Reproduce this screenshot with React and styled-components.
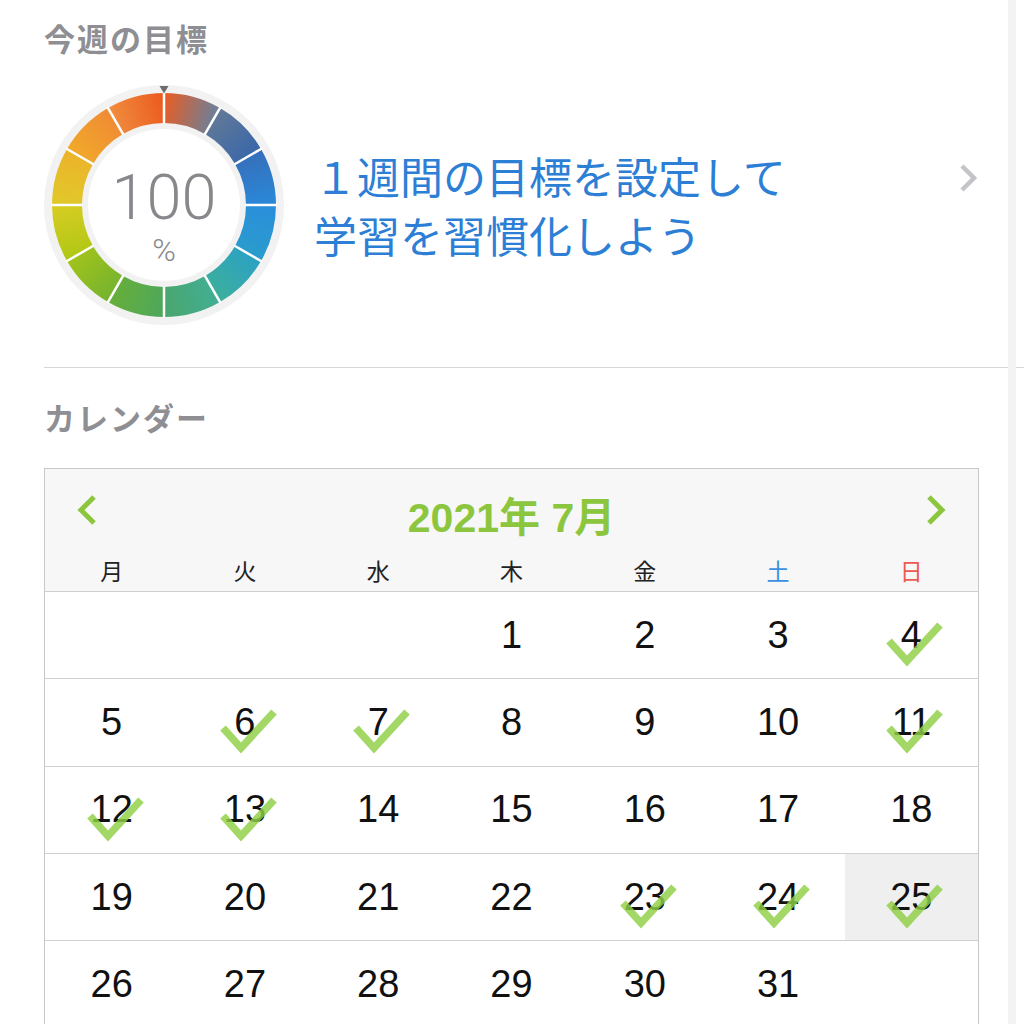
import React from 'react';
import styled, { createGlobalStyle } from 'styled-components';

const GlobalStyle = createGlobalStyle`
  html, body {
    margin: 0;
    background: #fff;
  }
  body {
    font-family: "Noto Sans CJK JP", "Noto Sans", sans-serif;
  }
`

const Page = styled.div`
  display: flex;
  width: 1024px;
  min-height: 1024px;
  overflow: hidden;
`

const Main = styled.div`
  width: 1008px;
  box-sizing: border-box;
  padding: 20px 29px 0 44px;
`

const Strip = styled.div`
  width: 8px;
  background: #f3f3f3;
`

const SectionTitle = styled.h2`
  margin: ${p => p.$top || 0}px 0 0;
  height: 36px;
  line-height: 36px;
  font-size: 31px;
  font-weight: 700;
  letter-spacing: 2px;
  color: #8e8e93;
`

const GoalRow = styled.div`
  display: flex;
  align-items: center;
  margin-top: 29px;
`

const RingWrap = styled.div`
  display: grid;
  width: 240px;
  height: 240px;
  flex-shrink: 0;

  & > * {
    grid-area: 1 / 1;
  }
`

const RingLabel = styled.div`
  display: flex;
  flex-direction: column;
  align-items: center;
  justify-content: center;
  padding-top: 22px;
  color: #88888c;
  font-family: Roboto, "Open Sans", sans-serif;
  font-weight: 300;
`

const Percent = styled.span`
  font-size: 63px;
  line-height: 63px;
`

const PercentSign = styled.span`
  font-size: 32px;
  line-height: 32px;
  margin-top: 5px;
`

const GoalText = styled.div`
  flex: 1;
  margin-left: 30px;
  font-size: 43px;
  line-height: 59px;
  font-weight: 400;
  color: #2d7fd6;
`

const Chevron = styled.svg`
  align-self: flex-start;
  margin-top: 78px;
  margin-right: 2px;
  flex-shrink: 0;
`

const Divider = styled.hr`
  margin: 42px -45px 0 0;
  border: none;
  border-top: 1px solid #d6d6d6;
`

const Calendar = styled.div`
  margin-top: 33px;
  border: 1px solid #c8c8c8;
  border-bottom: none;
`

const CalHeader = styled.div`
  background: #f7f7f7;
  padding-bottom: 10px;
`

const MonthBar = styled.div`
  display: flex;
  align-items: center;
  justify-content: space-between;
  height: 90px;
  padding: 0 32px;
`

const MonthArrow = styled.svg`
  margin-bottom: 8px;
`

const MonthTitle = styled.div`
  font-family: "Liberation Sans", "Noto Sans CJK JP", sans-serif;
  font-size: 41px;
  font-weight: 700;
  color: #8cc63f;
`

const WeekRow = styled.div`
  display: grid;
  grid-template-columns: repeat(7, 1fr);
`

const WeekDay = styled.div`
  text-align: center;
  font-size: 23px;
  line-height: 22px;
  font-weight: 400;
  color: ${p => p.$color || '#222'};
`

const DayRow = styled.div`
  display: grid;
  grid-template-columns: repeat(7, 1fr);
  height: 86.3px;
  border-top: 1px solid #d0d0d0;
`

const Cell = styled.div`
  position: relative;
  display: flex;
  align-items: center;
  justify-content: center;
  background: ${p => (p.$today ? '#efefef' : 'transparent')};
  font-family: "Liberation Sans", Arial, sans-serif;
  font-size: 38px;
  color: #111;
`

const Check = styled.svg`
  position: absolute;
  left: 50%;
  top: 50%;
  transform: translate(-27px, -16px);
  opacity: 0.82;
  pointer-events: none;
`

const SEGMENTS = [
  ['#e55e28', '#6f7f96'],
  ['#5f7898', '#3c68a8'],
  ['#3670bc', '#2a88d8'],
  ['#2a8edc', '#2a9ccc'],
  ['#2ca2c2', '#3cae9e'],
  ['#42ae92', '#4aa66e'],
  ['#4ea85a', '#66ae3c'],
  ['#76b42e', '#a0c21c'],
  ['#b2c816', '#d6cc22'],
  ['#e0c82a', '#ecb42a'],
  ['#f0a82a', '#f08c34'],
  ['#f08a3c', '#ec5c20'],
]

const C = 120
const R_OUT = 112
const R_IN = 82

const pt = (r, deg) => {
  const a = (deg * Math.PI) / 180
  return [C + r * Math.sin(a), C - r * Math.cos(a)]
}

const GoalRing = () => (
  <svg width="240" height="240" viewBox="0 0 240 240">
    <defs>
      {SEGMENTS.map(([from, to], i) => {
        const [x1, y1] = pt(97, i * 30)
        const [x2, y2] = pt(97, i * 30 + 30)
        return (
          <linearGradient key={i} id={`seg${i}`} gradientUnits="userSpaceOnUse" x1={x1} y1={y1} x2={x2} y2={y2}>
            <stop offset="0" stopColor={from} />
            <stop offset="1" stopColor={to} />
          </linearGradient>
        )
      })}
    </defs>
    <circle cx={C} cy={C} r="120" fill="#f2f2f2" />
    {SEGMENTS.map((_, i) => {
      const a0 = i * 30
      const a1 = a0 + 30
      const [ox0, oy0] = pt(R_OUT, a0)
      const [ox1, oy1] = pt(R_OUT, a1)
      const [ix1, iy1] = pt(R_IN, a1)
      const [ix0, iy0] = pt(R_IN, a0)
      const d = `M${ox0} ${oy0} A${R_OUT} ${R_OUT} 0 0 1 ${ox1} ${oy1} L${ix1} ${iy1} A${R_IN} ${R_IN} 0 0 0 ${ix0} ${iy0}Z`
      return <path key={i} d={d} fill={`url(#seg${i})`} />
    })}
    {SEGMENTS.map((_, i) => {
      const [x1, y1] = pt(R_IN - 1, i * 30)
      const [x2, y2] = pt(R_OUT + 1, i * 30)
      return <line key={i} x1={x1} y1={y1} x2={x2} y2={y2} stroke="#fff" strokeWidth="2.5" />
    })}
    <circle cx={C} cy={C} r="76" fill="#fff" />
    <polygon points="115.5,1 124.5,1 120,8.5" fill="#6b6b70" />
  </svg>
)

const ArrowIcon = ({ dir }) => (
  <MonthArrow width="20" height="32" viewBox="0 0 20 32">
    <polyline
      points={dir === 'left' ? '17,3 4,16 17,29' : '3,3 16,16 3,29'}
      fill="none"
      stroke="#8cc63f"
      strokeWidth="5"
      strokeLinejoin="miter"
    />
  </MonthArrow>
)

const CheckMark = () => (
  <Check width="62" height="50" viewBox="0 0 62 50">
    <polyline points="5,22 23,42 56,6" fill="none" stroke="#8fd045" strokeWidth="7.5" />
  </Check>
)

const WEEKDAYS = [
  ['月'], ['火'], ['水'], ['木'], ['金'], ['土', '#3d8fe0'], ['日', '#ec5a50'],
]

const CHECKED = [4, 6, 7, 11, 12, 13, 23, 24, 25]
const TODAY = 25

const buildWeeks = () => {
  const days = [null, null, null]
  for (let d = 1; d <= 31; d++) days.push(d)
  while (days.length % 7) days.push(null)
  const weeks = []
  for (let i = 0; i < days.length; i += 7) weeks.push(days.slice(i, i + 7))
  return weeks
}

const App = () => {
  const weeks = buildWeeks()

  return (
    <Page>
      <GlobalStyle />
      <Main>
        <SectionTitle>今週の目標</SectionTitle>

        <GoalRow>
          <RingWrap>
            <GoalRing />
            <RingLabel>
              <Percent>100</Percent>
              <PercentSign>%</PercentSign>
            </RingLabel>
          </RingWrap>
          <GoalText>
            <div>１週間の目標を設定して</div>
            <div>学習を習慣化しよう</div>
          </GoalText>
          <Chevron width="18" height="30" viewBox="0 0 18 30">
            <polyline points="3,3 15,15 3,27" fill="none" stroke="#c4c4c8" strokeWidth="4.5" />
          </Chevron>
        </GoalRow>

        <Divider />

        <SectionTitle $top={31}>カレンダー</SectionTitle>

        <Calendar>
          <CalHeader>
            <MonthBar>
              <ArrowIcon dir="left" />
              <MonthTitle>2021年 7月</MonthTitle>
              <ArrowIcon dir="right" />
            </MonthBar>
            <WeekRow>
              {WEEKDAYS.map(([label, color]) => (
                <WeekDay key={label} $color={color}>{label}</WeekDay>
              ))}
            </WeekRow>
          </CalHeader>

          {weeks.map((week, w) => (
            <DayRow key={w}>
              {week.map((day, i) => (
                <Cell key={i} $today={day === TODAY}>
                  {day}
                  {CHECKED.includes(day) && <CheckMark />}
                </Cell>
              ))}
            </DayRow>
          ))}
        </Calendar>
      </Main>
      <Strip />
    </Page>
  )
}

export default App;
